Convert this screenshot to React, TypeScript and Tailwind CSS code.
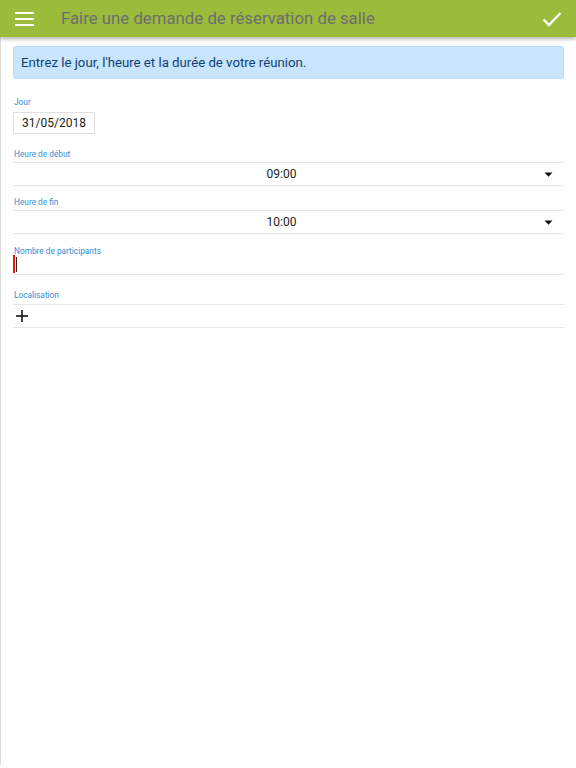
import React from "react";

function Label({ text }: { text: string }) {
  return <div className="text-[8.3px] leading-[12px] pt-[1px] h-[12px] text-[#2f8fd9] pl-[1px]">{text}</div>;
}

function Caret() {
  return (
    <svg width="9" height="5" viewBox="0 0 9 5" className="absolute right-[11px] top-[9px]">
      <path d="M0.5 0.5 L8.5 0.5 L4.5 4.8 Z" fill="#111" />
    </svg>
  );
}

export default function App() {
  return (
    <div
      className="w-[576px] h-[768px] bg-white overflow-hidden flex flex-col"
      style={{ fontFamily: "Roboto, 'Noto Sans', sans-serif" }}
    >
      <header className="h-[37px] shrink-0 bg-[#9bbb3b] flex items-center shadow-[0_2px_4px_rgba(0,0,0,0.3)] relative z-10">
        <svg width="20" height="14" viewBox="0 0 20 14" className="ml-[15px]">
          <rect x="0" y="0" width="19" height="2" fill="#fff" />
          <rect x="0" y="6" width="19" height="2" fill="#fff" />
          <rect x="0" y="12" width="19" height="2" fill="#fff" />
        </svg>
        <div className="ml-[26px] text-[16.8px] text-[#6e6e6e] leading-none flex-1">
          Faire une demande de réservation de salle
        </div>
        <svg width="20" height="16" viewBox="0 0 20 16" className="mr-[14px]">
          <path d="M1.5 8.5 L7 14 L18.5 2" stroke="#fff" strokeWidth="2.4" fill="none" />
        </svg>
      </header>
      <div className="flex-1 border-l border-[#dcdcdc] mb-[3px] pl-[12px] pr-[12px]">
        <div className="mt-[9px] h-[33px] bg-[#c9e4fd] border border-[#b8daff] rounded-[3px] flex items-center pl-[7px] text-[13.2px] text-[#0f3f78]">
          Entrez le jour, l'heure et la durée de votre réunion.
        </div>

        <div className="mt-[16px]">
          <Label text="Jour" />
          <div className="mt-[5px] w-[82px] h-[22px] border border-[#e0e0e0] flex items-center justify-center text-[12px] text-[#222]">
            31/05/2018
          </div>
        </div>

        <div className="mt-[13px]">
          <Label text="Heure de début" />
          <div className="relative mt-[3px] h-[24px] border-t border-b border-[#e6e6e6] flex items-center justify-center pr-[14px] text-[12px] text-[#222]">
            09:00
            <Caret />
          </div>
        </div>

        <div className="mt-[9px]">
          <Label text="Heure de fin" />
          <div className="relative mt-[3px] h-[24px] border-t border-b border-[#e6e6e6] flex items-center justify-center pr-[14px] text-[12px] text-[#222]">
            10:00
            <Caret />
          </div>
        </div>

        <div className="mt-[10px]">
          <Label text="Nombre de participants" />
          <div className="relative h-[19px] border-b border-[#e6e6e6]">
            <div className="absolute left-0 top-[-1px] w-[2px] h-[18px] bg-[#ee1111]" />
            <div className="absolute left-[3px] top-[1px] w-[1px] h-[15px] bg-[#222]" />
          </div>
        </div>

        <div className="mt-[13px]">
          <Label text="Localisation" />
          <div className="mt-[4px] h-[24px] border-t border-b border-[#e6e6e6] flex items-center pl-[3px]">
            <svg width="12" height="12" viewBox="0 0 12 12">
              <rect x="0" y="5.2" width="12" height="1.6" fill="#111" />
              <rect x="5.2" y="0" width="1.6" height="12" fill="#111" />
            </svg>
          </div>
        </div>
      </div>
    </div>
  );
}
